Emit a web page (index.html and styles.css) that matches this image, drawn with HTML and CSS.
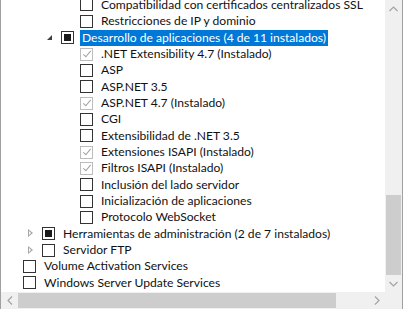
FILE: index.html
```html
<!DOCTYPE html>
<html lang="es">
<head>
  <meta charset="UTF-8">
  <title>Roles y características</title>
  <link rel="stylesheet" href="styles.css">
</head>
<body>

<div class="tree-window">
  <div class="tree-view">
    <ul class="tree">
      <li>
        <ul>
          <li>
            <ul>
              <li>
                <ul>
                  <li class="row"><span class="exp"></span><span class="box"></span><span class="label">Compatibilidad con certificados centralizados SSL</span></li>
                  <li class="row"><span class="exp"></span><span class="box"></span><span class="label">Restricciones de IP y dominio</span></li>
                </ul>
              </li>
              <li class="row"><span class="exp open"></span><span class="box partial"></span><span class="label selected">Desarrollo de aplicaciones (4 de 11 instalados)</span></li>
              <li>
                <ul>
                  <li class="row"><span class="exp"></span><span class="box checked"></span><span class="label">.NET Extensibility 4.7 (Instalado)</span></li>
                  <li class="row"><span class="exp"></span><span class="box"></span><span class="label">ASP</span></li>
                  <li class="row"><span class="exp"></span><span class="box"></span><span class="label">ASP.NET 3.5</span></li>
                  <li class="row"><span class="exp"></span><span class="box checked"></span><span class="label">ASP.NET 4.7 (Instalado)</span></li>
                  <li class="row"><span class="exp"></span><span class="box"></span><span class="label">CGI</span></li>
                  <li class="row"><span class="exp"></span><span class="box"></span><span class="label">Extensibilidad de .NET 3.5</span></li>
                  <li class="row"><span class="exp"></span><span class="box checked"></span><span class="label">Extensiones ISAPI (Instalado)</span></li>
                  <li class="row"><span class="exp"></span><span class="box checked"></span><span class="label">Filtros ISAPI (Instalado)</span></li>
                  <li class="row"><span class="exp"></span><span class="box"></span><span class="label">Inclusión del lado servidor</span></li>
                  <li class="row"><span class="exp"></span><span class="box"></span><span class="label">Inicialización de aplicaciones</span></li>
                  <li class="row"><span class="exp"></span><span class="box"></span><span class="label">Protocolo WebSocket</span></li>
                </ul>
              </li>
            </ul>
          </li>
          <li class="row"><span class="exp closed"></span><span class="box partial"></span><span class="label">Herramientas de administración (2 de 7 instalados)</span></li>
          <li class="row"><span class="exp closed"></span><span class="box"></span><span class="label">Servidor FTP</span></li>
        </ul>
      </li>
      <li class="row"><span class="exp"></span><span class="box"></span><span class="label">Volume Activation Services</span></li>
      <li class="row"><span class="exp"></span><span class="box"></span><span class="label">Windows Server Update Services</span></li>
    </ul>
  </div>

  <div class="vscroll">
    <span class="arrow">
      <svg width="9" height="6" viewBox="0 0 9 6"><path d="M0.5 5 L4.5 1 L8.5 5" fill="none" stroke="#a3a3a3" stroke-width="1.2"/></svg>
    </span>
    <div class="track"><div class="thumb"></div></div>
    <span class="arrow">
      <svg width="9" height="6" viewBox="0 0 9 6"><path d="M0.5 1 L4.5 5 L8.5 1" fill="none" stroke="#a3a3a3" stroke-width="1.2"/></svg>
    </span>
  </div>

  <div class="hscroll">
    <span class="arrow">
      <svg width="6" height="9" viewBox="0 0 6 9"><path d="M5 0.5 L1 4.5 L5 8.5" fill="none" stroke="#a3a3a3" stroke-width="1.2"/></svg>
    </span>
    <div class="track"><div class="thumb"></div></div>
    <span class="arrow">
      <svg width="6" height="9" viewBox="0 0 6 9"><path d="M1 0.5 L5 4.5 L1 8.5" fill="none" stroke="#a3a3a3" stroke-width="1.2"/></svg>
    </span>
  </div>

  <div class="corner"></div>
</div>

</body>
</html>
```

FILE: styles.css
```css
* {
  margin: 0;
  padding: 0;
  box-sizing: border-box;
}
body {
  width: 403px;
  height: 309px;
  background: #fff;
  overflow: hidden;
  font-family: Lato, "Noto Sans", sans-serif;
  font-size: 12.1px;
  color: #111;
}
.tree-window {
  width: 403px;
  height: 309px;
  display: grid;
  grid-template-columns: 1fr 17px;
  grid-template-rows: 1fr 17px;
  border-left: 1px solid #a0a0a0;
  border-right: 1px solid #a0a0a0;
  background: #fff;
}
.tree-view {
  overflow: hidden;
  position: relative;
}
ul {
  list-style: none;
}
.tree {
  margin-top: -3.2px;
  padding-left: 3px;
}
.tree ul {
  padding-left: 19px;
}
.row {
  height: 16.35px;
  display: flex;
  align-items: center;
  white-space: nowrap;
}
.exp {
  width: 19px;
  height: 13px;
  flex: none;
  position: relative;
}
.exp.open::after {
  content: "";
  position: absolute;
  left: 5px;
  top: 4px;
  border-style: solid;
  border-width: 0 0 5px 5px;
  border-color: transparent transparent #404040 transparent;
}
.exp.closed::after {
  content: "";
  position: absolute;
  left: 5px;
  top: 2px;
  width: 0;
  height: 0;
  border-style: solid;
  border-width: 4px 0 4px 5px;
  border-color: transparent transparent transparent #a6a6a6;
}
.exp.closed::before {
  content: "";
  position: absolute;
  left: 6px;
  top: 4px;
  width: 0;
  height: 0;
  border-style: solid;
  border-width: 2px 0 2px 2.6px;
  border-color: transparent transparent transparent #fff;
  z-index: 1;
}
.box {
  width: 13px;
  height: 13px;
  flex: none;
  border: 1px solid #333;
  background: #fff;
  position: relative;
}
.box.partial::after {
  content: "";
  position: absolute;
  left: 2px;
  top: 2px;
  width: 7px;
  height: 7px;
  background: #1a1a1a;
}
.box.checked {
  border-color: #bcbcbc;
}
.box.checked::after {
  content: "";
  position: absolute;
  left: 3.5px;
  top: 0.5px;
  width: 3px;
  height: 7px;
  border-right: 1.6px solid #a0a0a0;
  border-bottom: 1.6px solid #a0a0a0;
  transform: rotate(40deg);
}
.label {
  margin-left: 6px;
  padding: 0 2px;
  line-height: 16px;
}
.label.selected {
  background: #0078d7;
  color: #fff;
}
.vscroll {
  background: #f0f0f0;
  display: flex;
  flex-direction: column;
}
.vscroll .arrow {
  height: 17px;
  flex: none;
  display: flex;
  align-items: center;
  justify-content: center;
}
.vscroll .track {
  flex: 1;
  padding-top: 178px;
}
.vscroll .thumb {
  width: 15px;
  margin: 0 auto;
  height: 80px;
  background: #cdcdcd;
}
.hscroll {
  background: #f0f0f0;
  display: flex;
}
.hscroll .arrow {
  width: 17px;
  flex: none;
  display: flex;
  align-items: center;
  justify-content: center;
}
.hscroll .track {
  flex: 1;
  padding-right: 32px;
  display: flex;
  align-items: center;
}
.hscroll .thumb {
  height: 15px;
  width: 100%;
  background: #cdcdcd;
}
.corner {
  background: #f0f0f0;
}
```
